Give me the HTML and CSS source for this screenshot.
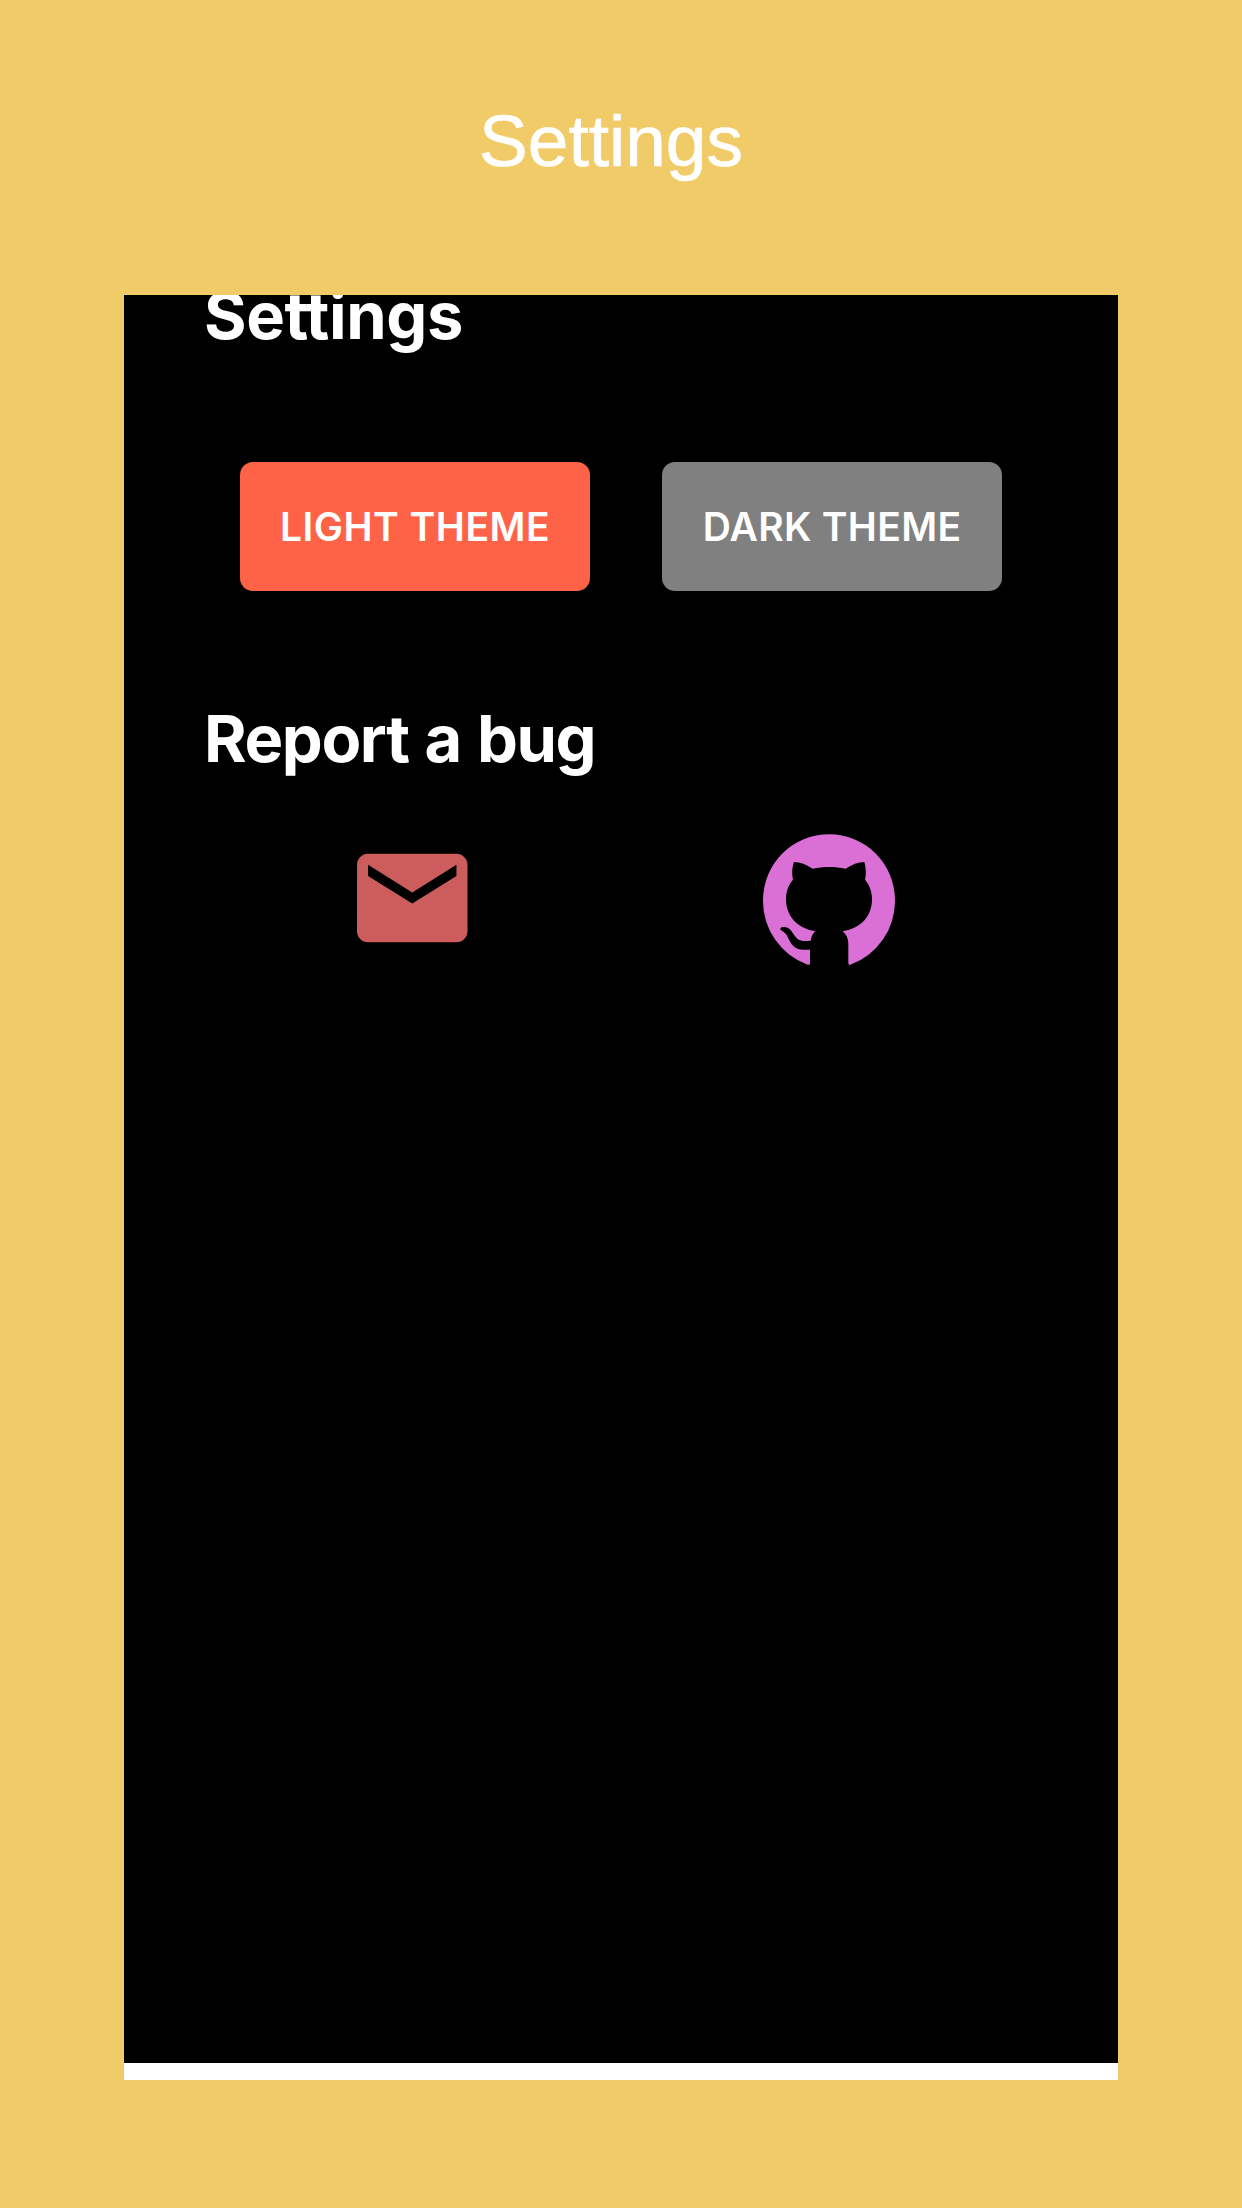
FILE: index.html
```html
<!DOCTYPE html>
<html lang="en">
<head>
<meta charset="utf-8">
<title>Settings</title>
<link rel="stylesheet" href="styles.css">
</head>
<body>
<main class="page">
  <h1 class="page-title">Settings</h1>
  <section class="screen">
    <h2 class="heading heading-settings">Settings</h2>
    <div class="themes">
      <button class="button button-light" type="button">LIGHT THEME</button>
      <button class="button button-dark" type="button">DARK THEME</button>
    </div>
    <h2 class="heading heading-report">Report a bug</h2>
    <div class="contacts">
      <svg class="icon-mail" viewBox="2 4 20 16" role="img" aria-label="Email">
        <path d="M20 4H4c-1.1 0-1.99.9-1.99 2L2 18c0 1.1.9 2 2 2h16c1.1 0 2-.9 2-2V6c0-1.1-.9-2-2-2zm0 4l-8 5-8-5V6l8 5 8-5v2z"/>
      </svg>
      <svg class="icon-github" viewBox="39 40 396 396" role="img" aria-label="GitHub">
        <path d="M173 432A203 203 0 0 1 39 239A198 198.500 0 0 1 435 239A203 203 0 0 1 301 432Q295 434 295 428V370C295 353 289 341 278 332C335 322 366 285 366 235C366 213 359 193 345 177C349 160 348 141 343 124C325 124 305 132 287 144C255 137 220 137 188 144C170 132 150 124 132 124C126 141 125 160 129 177C115 193 108 213 108 235C108 285 140 322 196 332C188 339 184 347 182 360C165 362 152 362 143 355C130 345 126 325 108 320C98 318 91 320 91 324C91 330 102 331 110 343C120 360 125 386 158 387H180V428Q180 434 173 432Z"/>
      </svg>
    </div>
  </section>
</main>
</body>
</html>
```
FILE: styles.css
```css
* { box-sizing: border-box; }
body { margin: 0; background: #f2cb69; }
.page {
  width: 1242px;
  height: 2208px;
  padding: 0 124px 128px;
  display: flex;
  flex-direction: column;
}
.page-title {
  flex: none;
  height: 295px;
  margin: 0;
  padding: 99px 20px 0 0;
  color: #fff;
  font: 400 73px/84px "Liberation Sans", Arial, sans-serif;
  -webkit-text-stroke: 0.7px #fff;
  text-align: center;
}
.screen {
  flex: 1;
  overflow: hidden;
  background: #000;
  border-bottom: 17px solid #fff;
}
.heading {
  margin: 0 0 0 80px;
  color: #fff;
  font: 700 65px/80px Inter, sans-serif;
}
.heading-settings { margin-top: -19px; letter-spacing: -0.4px; }
.heading-report { margin-top: 108px; letter-spacing: -1.4px; word-spacing: 2px; }
.themes {
  display: flex;
  gap: 72px;
  margin: 106px 0 0 116px;
}
.button {
  height: 129px;
  padding: 0;
  border: 0;
  border-radius: 13px;
  color: #fff;
  font: 600 39px/48px Inter, sans-serif;
  letter-spacing: 0.5px;
}
.button-light { width: 350px; background: #ff6347; }
.button-dark { width: 340px; background: #808080; letter-spacing: 0.3px; }
.contacts {
  display: flex;
  align-items: flex-start;
  gap: 295.5px;
  margin: 54.5px 0 0 233px;
}
.icon-mail { width: 110.5px; height: 90px; margin-top: 19.500px; fill: #cd5c5c; }
.icon-github { width: 132px; height: 132px; fill: #da70d6; }
```
